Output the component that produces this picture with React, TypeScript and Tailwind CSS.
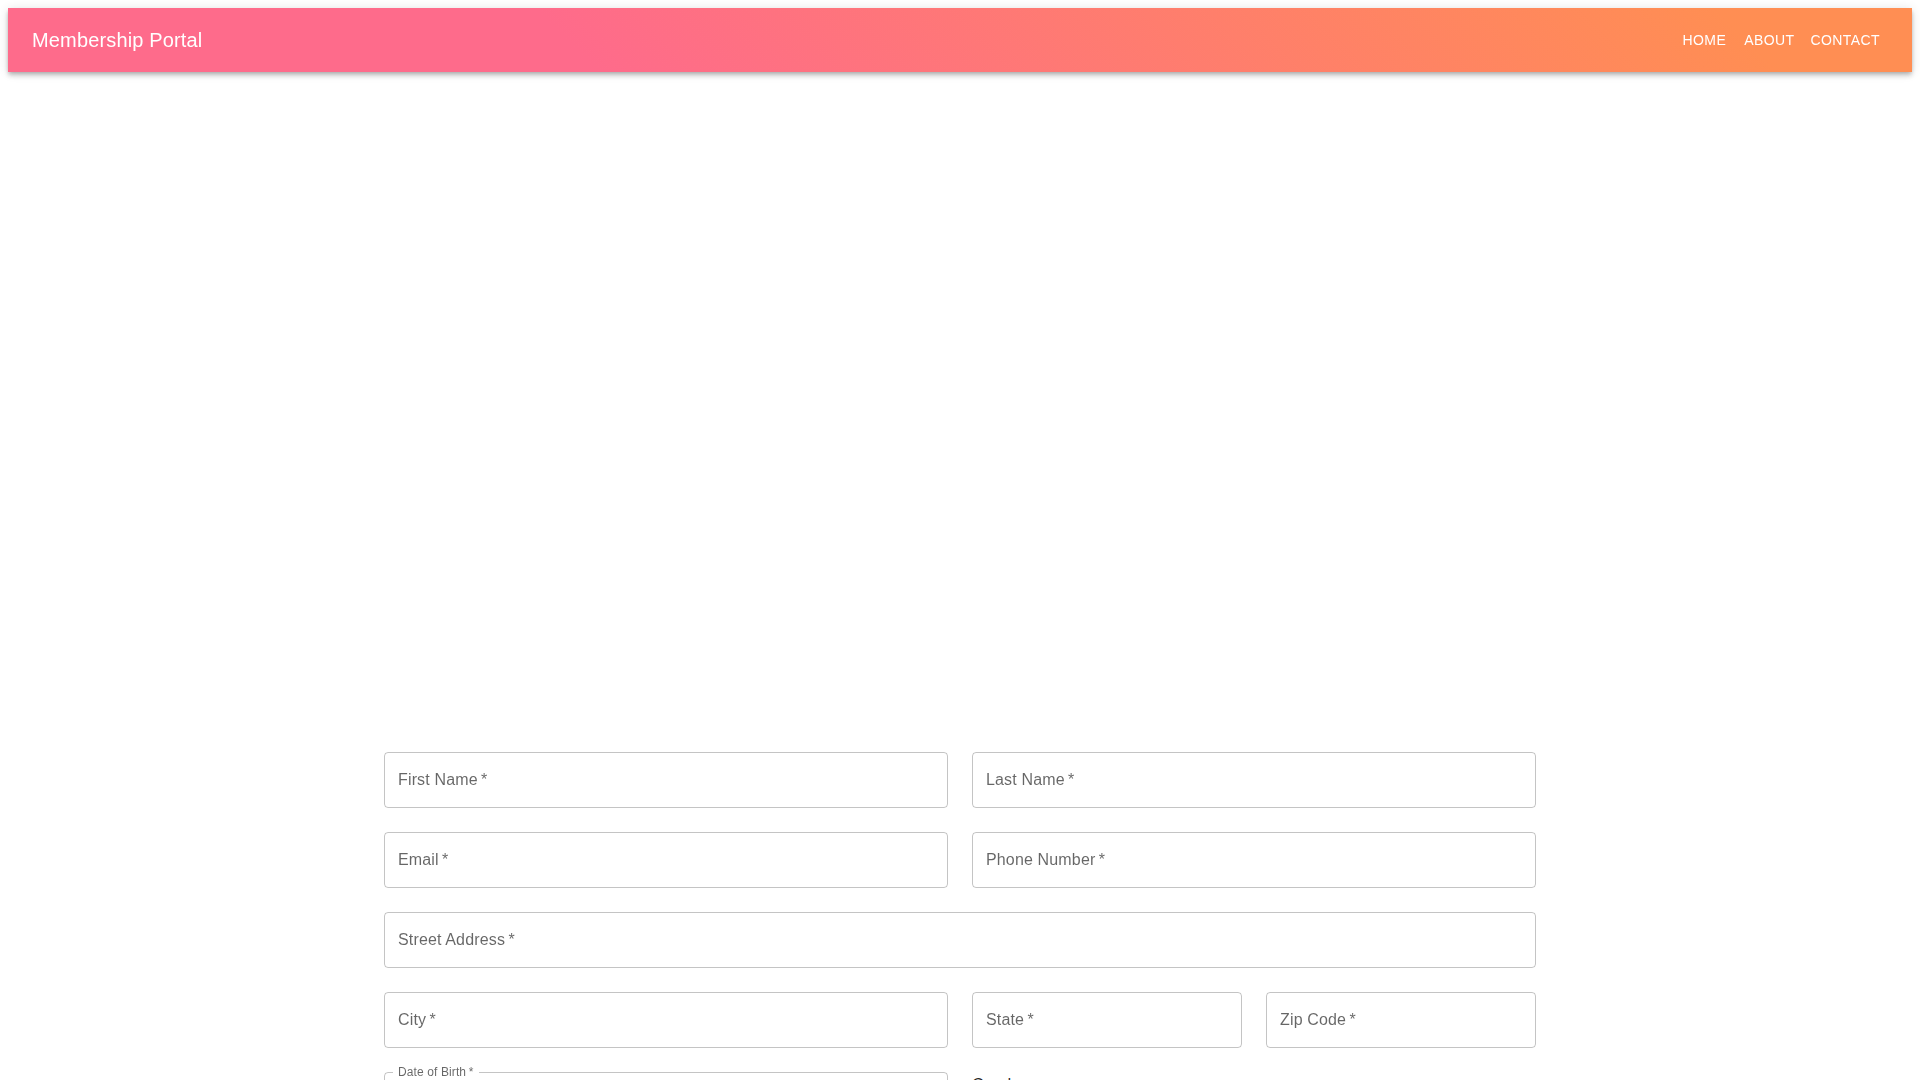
import React from "react";

const Field = ({ label }: { label: string }) => {
  return (
    <label className="flex h-14 items-center rounded border border-black/[.23] px-[13px] text-base tracking-[0.15px] text-black/60">
      <span className="transform-gpu">
        {label}
        {"\u2009*"}
      </span>
    </label>
  );
};

export default function App() {
  return (
    <div className="h-screen overflow-hidden bg-white p-2 font-['Liberation_Sans',Arial,sans-serif]">
      <header className="flex h-16 transform-gpu items-center justify-between bg-[linear-gradient(45deg,#FE6B8B_30%,#FF8E53_90%)] px-6 text-white shadow-[0px_2px_4px_-1px_rgba(0,0,0,0.2),0px_4px_5px_0px_rgba(0,0,0,0.14),0px_1px_10px_0px_rgba(0,0,0,0.12)]">
        <h6 className="text-xl font-medium tracking-[0.15px]">
          Membership Portal
        </h6>
        <nav className="flex items-center">
          <button className="min-w-16 px-2 py-1.5 text-sm font-medium uppercase tracking-[0.4px]">
            Home
          </button>
          <button className="min-w-16 px-2 py-1.5 text-sm font-medium uppercase tracking-[0.4px]">
            About
          </button>
          <button className="min-w-16 px-2 py-1.5 text-sm font-medium uppercase tracking-[0.4px]">
            Contact
          </button>
        </nav>
      </header>

      <form className="mx-auto mt-[680px] flex w-[1152px] flex-col gap-6">
        <div className="grid grid-cols-2 gap-6">
          <Field label="First Name" />
          <Field label="Last Name" />
        </div>
        <div className="grid grid-cols-2 gap-6">
          <Field label="Email" />
          <Field label="Phone Number" />
        </div>
        <Field label="Street Address" />
        <div className="grid grid-cols-2 gap-6">
          <Field label="City" />
          <div className="grid grid-cols-2 gap-6">
            <Field label="State" />
            <Field label="Zip Code" />
          </div>
        </div>
        <div className="grid grid-cols-2 gap-6">
          <fieldset className="-mt-[7px] h-[63px] rounded border border-black/[.23] px-2">
            <legend className="pl-[5px] pr-1.5 text-xs leading-[14px] tracking-[0.11px] text-black/60">
              <span className="inline-block transform-gpu">
                Date of Birth{"\u2009*"}
              </span>
            </legend>
          </fieldset>
          <div className="pt-[1px] text-base leading-6 text-black/[.87]">
            Gender
          </div>
        </div>
      </form>
    </div>
  );
}
